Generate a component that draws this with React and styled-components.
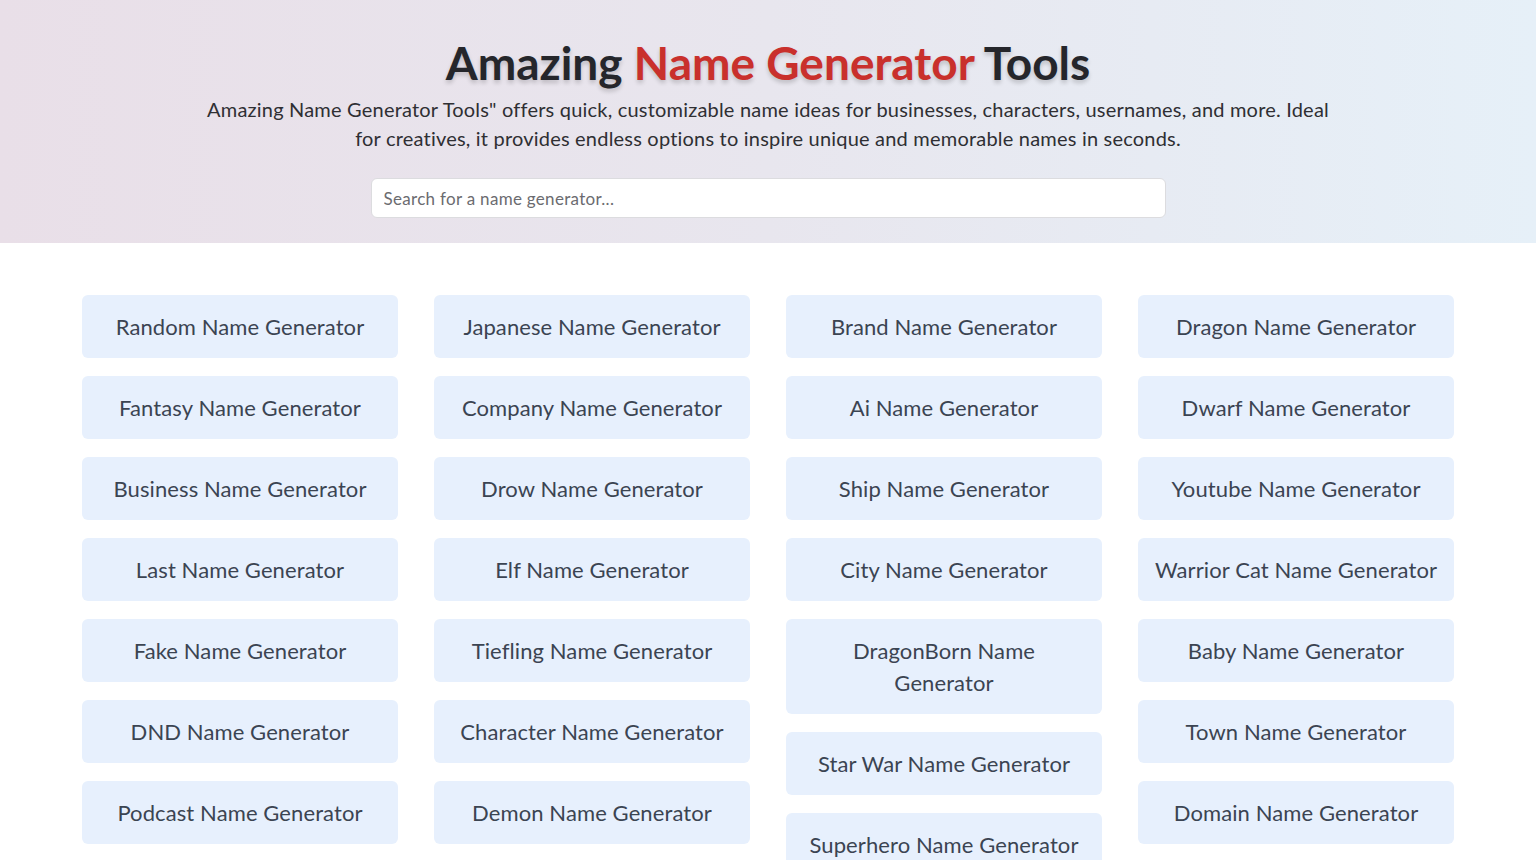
import React from "react";
import styled, { createGlobalStyle } from "styled-components";

const columns = [
  [
    "Random Name Generator",
    "Fantasy Name Generator",
    "Business Name Generator",
    "Last Name Generator",
    "Fake Name Generator",
    "DND Name Generator",
    "Podcast Name Generator",
  ],
  [
    "Japanese Name Generator",
    "Company Name Generator",
    "Drow Name Generator",
    "Elf Name Generator",
    "Tiefling Name Generator",
    "Character Name Generator",
    "Demon Name Generator",
  ],
  [
    "Brand Name Generator",
    "Ai Name Generator",
    "Ship Name Generator",
    "City Name Generator",
    "DragonBorn Name Generator",
    "Star War Name Generator",
    "Superhero Name Generator",
  ],
  [
    "Dragon Name Generator",
    "Dwarf Name Generator",
    "Youtube Name Generator",
    "Warrior Cat Name Generator",
    "Baby Name Generator",
    "Town Name Generator",
    "Domain Name Generator",
  ],
];

const App = () => {
  return (
    <React.Fragment>
      <GlobalStyle />
      <Header>
        <Title>
          Amazing <Accent>Name Generator</Accent> Tools
        </Title>
        <Intro>
          Amazing Name Generator Tools" offers quick, customizable name ideas
          for businesses, characters, usernames, and more. Ideal for creatives,
          it provides endless options to inspire unique and memorable names in
          seconds.
        </Intro>
        <Search type="text" placeholder="Search for a name generator..." />
      </Header>
      <Grid>
        {columns.map((col, i) => (
          <Column key={i}>
            {col.map((name) => (
              <Card key={name} href="#">
                {name}
              </Card>
            ))}
          </Column>
        ))}
      </Grid>
    </React.Fragment>
  );
};

const GlobalStyle = createGlobalStyle`
  body {
    margin: 0;
    background: #ffffff;
    font-family: "Lato", "Open Sans", sans-serif;
    color: #333;
  }
`;

const Header = styled.header`
  display: flex;
  flex-direction: column;
  align-items: center;
  padding: 36px 20px 25px;
  background: linear-gradient(90deg, #e9dfe8 0%, #e8e6ee 50%, #e6f0f8 100%);
`;

const Title = styled.h1`
  margin: 0;
  font-size: 46px;
  line-height: 53px;
  font-weight: 700;
  color: #25262b;
  text-shadow: 0 3px 4px rgba(0, 0, 0, 0.18);
`;

const Accent = styled.span`
  color: #c9302c;
`;

const Intro = styled.p`
  margin: 6px 0 0;
  max-width: 1135px;
  text-align: center;
  font-size: 20px;
  line-height: 29px;
  letter-spacing: 0.2px;
  color: #2f2f33;
`;

const Search = styled.input`
  box-sizing: border-box;
  margin-top: 25px;
  width: 795px;
  height: 40px;
  padding: 0 12px;
  border: 1px solid #dcdcdf;
  border-radius: 6px;
  background: #fff;
  font-family: inherit;
  font-size: 17px;
  letter-spacing: 0.3px;
  color: #333;
  outline: none;
  &::placeholder {
    color: #6b6b70;
  }
`;

const Grid = styled.main`
  display: grid;
  grid-template-columns: repeat(4, 316px);
  column-gap: 36px;
  justify-content: center;
  align-items: start;
  padding: 52px 0 40px;
`;

const Column = styled.div`
  display: flex;
  flex-direction: column;
  gap: 18px;
`;

const Card = styled.a`
  display: block;
  padding: 16px 16px 15px;
  border-radius: 6px;
  background: #e7f0fd;
  text-align: center;
  text-decoration: none;
  font-size: 22px;
  line-height: 32px;
  letter-spacing: 0.1px;
  color: #3b4452;
`;

export default App;
